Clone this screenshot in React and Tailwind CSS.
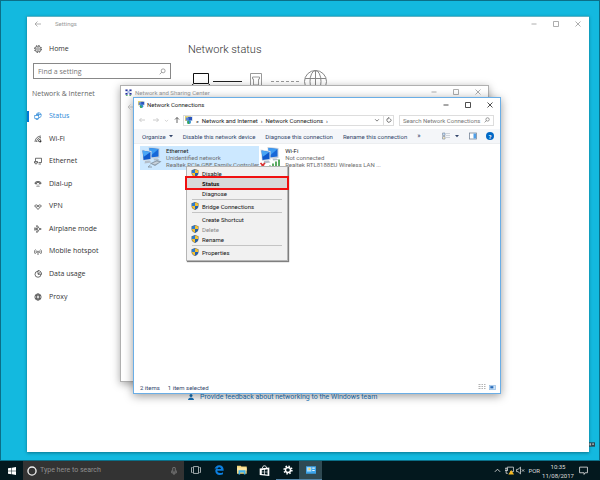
import React from "react";
import clsx from "clsx";

const UI_FONT = "font-['Roboto','Liberation_Sans',sans-serif]";
const PAGE_FONT = "font-['Open_Sans','Noto_Sans',sans-serif]";

function Icon({ size = 16, className, children, ...rest }) {
  return (
    <svg
      viewBox={`0 0 ${size} ${size}`}
      fill="none"
      stroke="currentColor"
      aria-hidden="true"
      className={clsx("shrink-0", className)}
      {...rest}
    >
      {children}
    </svg>
  );
}

function GearIcon({ className }) {
  return (
    <Icon className={className} strokeWidth="1.2">
      <circle cx="8" cy="8" r="2.6" />
      <circle cx="8" cy="8" r="5.6" />
      <circle cx="8" cy="8" r="7" strokeWidth="1.8" strokeDasharray="2.75 2.75" />
    </Icon>
  );
}

function SearchIcon({ className }) {
  return (
    <Icon className={className} strokeWidth="1.5">
      <circle cx="9.5" cy="6.5" r="4.5" />
      <path d="M6.3 9.7 1.5 14.5" />
    </Icon>
  );
}

const NAV = [
  {
    label: "Status",
    icon: (
      <>
        <circle cx="9.5" cy="6.5" r="5" />
        <path d="M5 5h9.500M9.500 1.500c-3 3-2 8 0 10" />
        <rect x="1.500" y="7" width="8" height="6" fill="#fff" />
        <path d="M3.500 15h5" />
      </>
    ),
  },
  {
    label: "Wi-Fi",
    icon: (
      <>
        <path d="M2 14A12 12 0 0 1 14 2M5 14a9 9 0 0 1 9-9M8 14a6 6 0 0 1 6-6" />
        <path d="M11 14a3 3 0 0 1 3-3v3z" fill="currentColor" />
      </>
    ),
  },
  {
    label: "Ethernet",
    icon: (
      <>
        <path d="M3 8V2.500h12V11H9" />
        <path d="M1 9h6v3H1zM4 12v3M9 14h5" />
      </>
    ),
  },
  {
    label: "Dial-up",
    icon: (
      <>
        <path d="M2 6c0-4 12-4 12 0v1.500h-3V5.500C9 4.700 7 4.700 5 5.500v2H2z" fill="currentColor" fillOpacity=".3" />
        <path d="M6 9v1.500M10 9v1.500M6 12.500V14M10 12.500V14M8 10v1M8 13v1" />
      </>
    ),
  },
  {
    label: "VPN",
    icon: (
      <>
        <path d="M1 6c2-3 5-3 7 0s5 3 7 0M1 6c2 3 5 3 7 0s5-3 7 0" />
        <path d="M4.500 9 8 13l3.500-4" />
      </>
    ),
  },
  {
    label: "Airplane mode",
    icon: (
      <path d="M1.500 5.500 4 7h3L5 1.500h2L10.500 7H13c2 0 2 2 0 2h-2.500L7 14.500H5L7 9H4l-2.500 1.500z" />
    ),
  },
  {
    label: "Mobile hotspot",
    icon: (
      <>
        <path d="M3 3C.5 5.500.5 9.500 3 12M5.500 5c-1.500 1.500-1.500 3.500 0 5M13 3c2.500 2.500 2.500 6.500 0 9M10.500 5c1.500 1.500 1.500 3.500 0 5" />
        <path d="M8 8v6" />
        <circle cx="8" cy="7.500" r=".8" />
      </>
    ),
  },
  {
    label: "Data usage",
    icon: (
      <>
        <circle cx="8" cy="8.500" r="6" />
        <path d="M8 8.500V1a7 7 0 0 1 7 7.500z" fill="#fff" />
        <path d="M8 8.500 13 4" />
      </>
    ),
  },
  {
    label: "Proxy",
    icon: (
      <>
        <circle cx="8" cy="8" r="6.300" />
        <ellipse cx="8" cy="8" rx="3" ry="6.300" />
        <path d="M2.500 5.500h11M2.500 10.500h11" />
      </>
    ),
  },
];

function WindowButtons({ className }) {
  return (
    <div className={clsx("flex items-center gap-[14px]", className)}>
      <button aria-label="Minimize">
        <Icon className="size-2" strokeWidth="1.6">
          <path d="M3 8h10" />
        </Icon>
      </button>
      <button aria-label="Maximize">
        <Icon className="size-2" strokeWidth="1.6">
          <path d="M3 3h10v10H3z" />
        </Icon>
      </button>
      <button aria-label="Close">
        <Icon className="size-2" strokeWidth="1.6">
          <path d="m3 3 10 10M13 3 3 13" />
        </Icon>
      </button>
    </div>
  );
}

function NetworkIcon({ className }) {
  return (
    <Icon className={className} stroke="none">
      <rect x="0" y="0" width="12" height="10" fill="#e6d66a" />
      <rect x="5" y="1" width="10" height="9" fill="#b9c9e4" />
      <rect x="6" y="2" width="8" height="6.500" fill="#2b55bd" />
      <rect x="1.500" y="3" width="6" height="6" fill="#5b83d6" />
      <circle cx="8" cy="12" r="4" fill="#2f8fd0" />
      <path d="M5 11c2-2 3.500 0 3 2s2.500 1 0 3-4-2-3-5z" fill="#3fae4a" />
    </Icon>
  );
}

function SharingIcon({ className }) {
  return (
    <Icon className={className} stroke="none">
      <g fill="#24329c">
        <rect x="1" y="1" width="5" height="4" />
        <rect x="10" y="1" width="5" height="4" />
        <rect x="1" y="9" width="5" height="4" />
        <rect x="10" y="9" width="5" height="4" />
      </g>
      <path d="M5 4h6v6H5z" fill="#a9bcea" />
      <path d="M2 14h4v2H2zM10 14h4v2h-4z" fill="#37a34a" />
    </Icon>
  );
}

function ShieldIcon({ className }) {
  return (
    <Icon className={className} stroke="none">
      <path d="M8 0 15 2.500V8c0 4-3 6.500-7 8-4-1.500-7-4-7-8V2.500z" fill="#5b6570" />
      <path d="M8 1v7H2V3.200z" fill="#2b7bd0" />
      <path d="M8 1v7h6V3.200z" fill="#f5c02f" />
      <path d="M2 8h6v7C5 13.700 2 12 2 8z" fill="#f5c02f" />
      <path d="M14 8H8v7c3-1.300 6-3 6-7z" fill="#1e5fb4" />
    </Icon>
  );
}

function AdapterIcon({ wireless }) {
  return (
    <svg viewBox="0 0 48 44" className="h-[22px] w-6 shrink-0" aria-hidden="true">
      <path d="m17 2 22 2v20l-20 1z" fill="#c4cfdb" />
      <path d="m19 4 18 2v15l-17 2z" fill="#1768d8" />
      <path d="m19 4 18 2-14 12-4 2z" fill="#3c9bf2" />
      <path d="m3 7 20 3v18L6 30z" fill="#d4dde6" />
      <path d="m5 9 16 3v14L7 28z" fill="#0f58cc" />
      <path d="m5 9 16 3L7 22z" fill="#4aa5f5" />
      <path d="m10 30 9-1 4 4-14 2z" fill="#b3bec9" />
      <path d="m27 25 8 0 4 3-11 1z" fill="#b3bec9" />
      {wireless ? (
        <>
          <path d="m3 34 9 9M12 34l-9 9" stroke="#d93030" strokeWidth="3.500" />
          <g fill="#5bab62">
            <path d="M20 39h4v5h-4zM26 35h4v9h-4zM32 31h4v13h-4zM38 27h4v17h-4z" />
          </g>
        </>
      ) : (
        <>
          <path d="m20 35 14-7 9 3-13 9z" fill="#8d9caa" />
          <path d="m24 35 9-4 6 1-9 5z" fill="#c8d2db" />
          <path d="m21 38-5 4h8" fill="none" stroke="#8d9caa" strokeWidth="2" />
        </>
      )}
    </svg>
  );
}

function NetworkDiagram() {
  return (
    <svg viewBox="0 0 140 24" fill="none" className="h-6 w-[140px]" aria-hidden="true">
      <path d="M5.500 5.500h15v10h-15zM5 16l-2 3.500h20L21 16" stroke="#111" />
      <path d="M25 13.500h29" stroke="#222" />
      <path d="M62.500 19V5.500h11V19M65.500 17v-6h-1v-2h7v2h-1v6z" stroke="#999" />
      <path d="M83 13.500h30" stroke="#999" strokeDasharray="3 2" />
      <g stroke="#888">
        <circle cx="127.500" cy="13.500" r="11" />
        <ellipse cx="127.500" cy="13.500" rx="5.500" ry="11" />
        <path d="M127.500 2.500v22M117 10.500h21M117 17.500h21" />
      </g>
    </svg>
  );
}

function SettingsWindow() {
  return (
    <section className={clsx("absolute top-4 right-[11px] bottom-[9px] left-[27px] flex flex-col border-t border-[#5fb3c4] bg-white text-[7px] text-[#333] shadow-[0_1px_3px_rgba(0,50,60,0.5)]", PAGE_FONT)}>
      <header className="flex h-[13px] items-center pr-[7px] pl-[7px] text-[#999]">
        <button aria-label="Back">
          <Icon className="size-2" strokeWidth="1.500">
            <path d="M14 8H2M7 3 2 8l5 5" />
          </Icon>
        </button>
        <span className={clsx("ml-[13px] text-[6px] leading-2", UI_FONT)}>Settings</span>
        <WindowButtons className="ml-auto" />
      </header>
      <div className="flex min-h-0 flex-1">
        <aside className="flex w-[144px] shrink-0 flex-col pt-[15px]">
          <a href="#home" className="flex h-2 items-center gap-[7px] pl-[7px] leading-2">
            <GearIcon className="size-2" />
            Home
          </a>
          <label className="mt-[10px] ml-[6px] flex h-4 items-center border border-[#888] px-1">
            <input
              aria-label="Find a setting"
              placeholder="Find a setting"
              className="h-full min-w-0 flex-1 outline-none placeholder:text-[#777]"
            />
            <SearchIcon className="size-[7px] text-[#777]" />
          </label>
          <h2 className="mt-[11px] pl-[5px] leading-2 text-[#666]">Network &amp; Internet</h2>
          <nav className="mt-[7px] flex h-[203px] flex-col">
            {NAV.map((item, i) => (
              <a
                key={item.label}
                href={`#${item.label}`}
                className={clsx("flex flex-1 items-center", i === 0 && "text-[#2b88d8]")}
              >
                <span className={clsx("h-[11px] w-[2px]", i === 0 && "bg-[#0078d7]")} />
                <Icon className="ml-[5px] size-2" strokeWidth="1.400">
                  {item.icon}
                </Icon>
                <span className="ml-[7px]">{item.label}</span>
              </a>
            ))}
          </nav>
        </aside>
        <main className="flex-1 pt-[14px] pl-[17px]">
          <h1 className={clsx("text-[11px] leading-3 font-light", UI_FONT)}>Network status</h1>
          <div className="mt-3">
            <NetworkDiagram />
          </div>
          <a
            href="#feedback"
            className={clsx("mt-[301px] flex items-center gap-[6px] leading-2 text-[#1a75bb]", UI_FONT)}
          >
            <Icon className="size-[6px]" stroke="none" fill="currentColor">
              <circle cx="8" cy="4" r="4" />
              <path d="M0 16c0-9 16-9 16 0z" />
            </Icon>
            Provide feedback about networking to the Windows team
          </a>
        </main>
      </div>
    </section>
  );
}

function SharingCenterWindow() {
  return (
    <section className={clsx("absolute top-[85px] left-[120px] h-[297px] w-[369px] border border-[#b0b0b0] bg-white text-[6px] text-[#999] shadow-[0_2px_8px_rgba(0,0,0,0.35)]", UI_FONT)}>
      <header className="flex h-3 items-center pr-[6px] pl-1">
        <SharingIcon className="size-[7px]" />
        <span className="ml-[3px]">Network and Sharing Center</span>
        <WindowButtons className="ml-auto" />
      </header>
      <button aria-label="Back" className="mt-[5px] ml-[6px] block text-[#bbb]">
        <Icon className="size-2" strokeWidth="1.400">
          <path d="M14 8H2M7 3 2 8l5 5" />
        </Icon>
      </button>
    </section>
  );
}

function AddressRow() {
  return (
    <div className="flex h-[18px] items-center pr-[6px] pl-1 text-[#222]">
      <button aria-label="Back" className="text-[#bbb]">
        <Icon className="size-2" strokeWidth="1.500">
          <path d="M14 8H3M7 4 3 8l4 4" />
        </Icon>
      </button>
      <button aria-label="Forward" className="ml-[6px] text-[#bbb]">
        <Icon className="size-2" strokeWidth="1.500">
          <path d="M2 8h11M9 4l4 4-4 4" />
        </Icon>
      </button>
      <button aria-label="Recent locations" className="ml-1 text-[#bbb]">
        <Icon className="size-[5px]" strokeWidth="2">
          <path d="m3 6 5 5 5-5" />
        </Icon>
      </button>
      <button aria-label="Up" className="ml-1 text-[#555]">
        <Icon className="size-2" strokeWidth="1.800">
          <path d="M8 14V3M4 7l4-4 4 4" />
        </Icon>
      </button>
      <div className="ml-[2px] flex h-[11px] flex-1 items-center gap-[3px] border border-[#ddd] pl-px">
        <NetworkIcon className="size-2" />
        <span>«</span>
        <span>Network and Internet</span>
        <span>›</span>
        <span>Network Connections</span>
        <span>›</span>
        <button aria-label="Previous locations" className="ml-auto text-[#555]">
          <Icon className="size-[6px]" strokeWidth="2">
            <path d="m3 6 5 5 5-5" />
          </Icon>
        </button>
        <button aria-label="Refresh" className="flex h-full w-[10px] items-center justify-center border-l border-[#ddd] text-[#555]">
          <Icon className="size-[6px]" strokeWidth="2">
            <path d="M12 5a5.500 5.500 0 1 1-5-2M6 0l3 3-3 3" />
          </Icon>
        </button>
      </div>
      <label className="ml-[5px] flex h-[11px] w-[95px] items-center border border-[#ddd] px-[3px]">
        <input
          aria-label="Search Network Connections"
          placeholder="Search Network Connections"
          className="min-w-0 flex-1 outline-none placeholder:text-[#777]"
        />
        <SearchIcon className="size-[6px] text-[#555]" />
      </label>
    </div>
  );
}

function Toolbar() {
  return (
    <div className="flex h-[15px] items-center gap-[10px] border-b border-[#eceef0] bg-[#f4f6f9] pr-[6px] pl-2 text-[#33466b]">
      <button className="flex items-center gap-[3px]">
        Organize
        <Icon className="size-1" stroke="none" fill="currentColor">
          <path d="M0 4h16l-8 9z" />
        </Icon>
      </button>
      <button>Disable this network device</button>
      <button>Diagnose this connection</button>
      <button>Rename this connection</button>
      <button className="text-[7px]">»</button>
      <div className="ml-auto flex items-center">
        <button aria-label="Change your view" className="flex items-center gap-[5px]">
          <Icon className="size-2" strokeWidth="1.500" stroke="#8a96a5">
            <path d="M1 2h5v5H1zM1 9h5v5H1zM9 3h2M13 3h2M9 7h2M13 7h2M9 11h2M13 11h2" />
            <path d="M3 3h2v2H3z" fill="#3b8be0" stroke="none" />
            <path d="M3 11h2v2H3z" fill="#e0b23b" stroke="none" />
          </Icon>
          <Icon className="size-1" stroke="none" fill="currentColor">
            <path d="M0 4h16l-8 9z" />
          </Icon>
        </button>
        <button aria-label="Preview pane" className="ml-[10px]">
          <Icon className="size-2" strokeWidth="1.500" stroke="#6f7f92">
            <rect x="1" y="2" width="14" height="12" fill="#fff" />
            <path d="M9 3h5v10H9z" fill="#4f9fe8" stroke="none" />
          </Icon>
        </button>
        <button
          aria-label="Help"
          className="ml-[9px] flex size-2 items-center justify-center rounded-full bg-[#0068c6] font-bold text-white"
        >
          ?
        </button>
      </div>
    </div>
  );
}

const ADAPTERS = [
  { name: "Ethernet", state: "Unidentified network", device: "Realtek PCIe GBE Family Controller", selected: true },
  { name: "Wi-Fi", state: "Not connected", device: "Realtek RTL8188EU Wireless LAN ...", wireless: true },
];

function ConnectionsWindow() {
  return (
    <section className={clsx("absolute top-[97px] left-[133px] flex h-[297px] w-[368px] flex-col border border-[#6aaee6] bg-white text-[6px] text-[#222] shadow-[0_2px_9px_rgba(0,0,0,0.4)]", UI_FONT)}>
      <header className="flex h-[13px] items-center pr-[6px] pl-1">
        <NetworkIcon className="size-[7px]" />
        <span className="ml-[2px]">Network Connections</span>
        <WindowButtons className="ml-auto" />
      </header>
      <AddressRow />
      <Toolbar />
      <ul className="flex flex-1 items-start pt-[2px] pl-[6px]">
        {ADAPTERS.map((a) => (
          <li key={a.name} className={clsx("flex", a.selected && "min-w-[117px] bg-[#cce8ff]")}>
            <AdapterIcon wireless={a.wireless} />
            <div className="ml-[2px] pt-px pb-[2px] leading-[7px] whitespace-nowrap text-[#6d6d6d]">
              <div className="text-[#222]">{a.name}</div>
              <div>{a.state}</div>
              <div>{a.device}</div>
            </div>
          </li>
        ))}
      </ul>
      <footer className="flex h-3 items-center pr-1 pl-[6px] text-[#33466b]">
        <span>2 items</span>
        <span className="ml-2">1 item selected</span>
        <button aria-label="Details" className="ml-auto">
          <Icon className="size-2" strokeWidth="1.500" stroke="#999">
            <path d="M1 3h4M1 7h4M1 11h4M7 3h3M7 7h3M7 11h3M12 3h3M12 7h3M12 11h3" />
          </Icon>
        </button>
        <button aria-label="Large icons" className="ml-[3px]">
          <Icon className="size-[7px]" strokeWidth="1.500" stroke="#8fb8e0">
            <rect x="1" y="3" width="14" height="10" fill="#cfe4f8" />
            <path d="M3 5h7v5H3z" fill="#2468b8" stroke="none" />
          </Icon>
        </button>
      </footer>
    </section>
  );
}

const MENU = [
  [{ label: "Disable", shield: true }, { label: "Status", active: true }, { label: "Diagnose" }],
  [{ label: "Bridge Connections", shield: true }],
  [
    { label: "Create Shortcut" },
    { label: "Delete", shield: true, disabled: true },
    { label: "Rename", shield: true },
  ],
  [{ label: "Properties", shield: true }],
];

function ContextMenu() {
  return (
    <div className={clsx("absolute top-[166px] left-[186px] w-[102px] border border-[#b5b5b5] bg-[#f1f1f1] pt-px pb-[3px] text-[6px] text-[#111] shadow-[1px_1px_1px_rgba(0,0,0,0.5)]", UI_FONT)}>
      {MENU.map((group, g) => (
        <div
          key={g}
          className="before:mx-[5px] before:my-[1px] before:block before:h-px before:bg-[#c4c4c4] first:before:hidden"
        >
          {group.map((item) => (
            <button
              key={item.label}
              disabled={item.disabled}
              className={clsx(
                "flex h-[10px] w-full items-center",
                item.active && "bg-[#d8d8d8] font-bold outline-2 outline-[#f01010]",
                item.disabled && "text-[#888]"
              )}
            >
              <span className="w-[15px] pl-1">{item.shield && <ShieldIcon className="size-2" />}</span>
              {item.label}
            </button>
          ))}
        </div>
      ))}
    </div>
  );
}

function TaskButton({ label, active, running, children }) {
  return (
    <button
      aria-label={label}
      className={clsx(
        "flex w-[23px] items-center justify-center border-b",
        active ? "bg-[#2f4a53]" : "",
        active || running ? "border-[#5485a8]" : "border-transparent"
      )}
    >
      {children}
    </button>
  );
}

function Taskbar() {
  return (
    <footer className={clsx("flex h-[19px] shrink-0 bg-[#03181e] text-[7px] text-[#ddd]", UI_FONT)}>
      <button aria-label="Start" className="flex w-[23px] items-center justify-center text-white">
        <Icon className="size-2" stroke="none" fill="currentColor">
          <path d="m0 2.500 7-1V7.500H0zM8 1.300 16 0v7.500H8zM0 8.500h7v6l-7-1zM8 8.500h8V16l-8-1.300z" />
        </Icon>
      </button>
      <label className="flex w-[161px] items-center bg-[#333] pr-[6px] pl-1">
        <Icon className="size-[10px] text-[#eee]" strokeWidth="2.200">
          <circle cx="8" cy="8" r="6.500" />
        </Icon>
        <input
          aria-label="Type here to search"
          placeholder="Type here to search"
          className="ml-[3px] min-w-0 flex-1 outline-none placeholder:text-[#8f8f8f]"
        />
        <Icon className="size-2 text-[#888]" strokeWidth="1.500">
          <rect x="5.500" y="1" width="5" height="9" rx="1" />
          <path d="M3.500 7v5h9V7M8 12v4" />
        </Icon>
      </label>
      <TaskButton label="Task view">
        <Icon className="size-[10px] text-[#a8b0b2]" strokeWidth="1.500">
          <path d="M4 2.500h8v11H4zM2.500 4H.8v8h1.700M13.500 4h1.700v8h-1.700" />
        </Icon>
      </TaskButton>
      <TaskButton label="Microsoft Edge">
        <Icon className="size-[10px]" stroke="none" fill="#0c7fe0">
          <path d="M.8 7.200C1.500 2.800 4.500.3 8.300.3c4.500 0 7.100 3.200 7.100 7.300v1.700H5.200c.1 2.500 2.100 3.600 4.500 3.600 1.800 0 3.400-.5 4.700-1.400v3.300c-1.500.8-3.300 1.200-5.300 1.200-4.300 0-7-2.600-7-6.300 0-2.300 1.200-4.200 3.100-5.300C2.900 4.900 1.700 5.800.8 7.200zM5.400 6.400h5.700c0-1.800-1-2.900-2.700-2.900-1.600 0-2.700 1.200-3 2.900z" />
        </Icon>
      </TaskButton>
      <TaskButton label="File Explorer">
        <Icon className="size-[10px]" stroke="none">
          <path d="M0 1h6l1 1.500h8.500V14H0z" fill="#f3d37a" />
          <path d="M0 4h15.500v5H0z" fill="#fbe6a3" />
          <path d="M2.500 8.500h11V15H11v-3H5v3H2.500z" fill="#42b0e8" />
        </Icon>
      </TaskButton>
      <TaskButton label="Store">
        <Icon className="size-[11px]" stroke="#fff" strokeWidth="1.300">
          <path d="m1 5 14-1.500V16L1 14.500z" fill="#fff" stroke="none" />
          <path d="M5 4.500C5 0 11 0 11 4.500" />
          <path d="M4 7.500 7.300 7v2.700H4zM8.300 6.800 12.500 6.300v3.400H8.300zM4 10.700h3.300v2.700L4 13zM8.300 10.700h4.200V14l-4.200-.5z" fill="#03181e" stroke="none" />
        </Icon>
      </TaskButton>
      <TaskButton label="Settings" running>
        <Icon className="size-[10px]" stroke="#fff">
          <circle cx="8" cy="8" r="4" strokeWidth="2.200" />
          <circle cx="8" cy="8" r="6.200" strokeWidth="2.400" strokeDasharray="2.440 2.430" />
        </Icon>
      </TaskButton>
      <TaskButton label="Network Connections" active>
        <Icon className="size-[10px]" stroke="none">
          <rect x="0" y="2" width="16" height="12" fill="#3ba3ea" />
          <rect x="1.500" y="3.500" width="7" height="7" fill="#a8dcfa" />
          <path d="M10 4h4v2h-4zM10 8h4v1.500h-4z" fill="#e4f5ff" />
          <path d="M4 5h3v3H4z" fill="#f0d060" />
        </Icon>
      </TaskButton>
      <div className="ml-auto flex items-center">
        <button aria-label="Show hidden icons">
          <Icon className="size-[7px]" strokeWidth="2">
            <path d="m2 11 6-6 6 6" />
          </Icon>
        </button>
        <button aria-label="Network" className="ml-1">
          <Icon className="size-[9px]" strokeWidth="1.400">
            <path d="M4 9V2h11v8H9M0 4h4v4H0zM2 8v5h3" />
            <path d="m11 7 5 8H6z" fill="#f5b921" stroke="none" />
          </Icon>
        </button>
        <button aria-label="Volume muted" className="ml-[2px]">
          <Icon className="size-[9px]" strokeWidth="1.400">
            <path d="M1 6h2.500L8 2v12l-4.500-4H1zM10.500 6l4 4M14.500 6l-4 4" />
          </Icon>
        </button>
        <span className="ml-[3px] text-[6px]">POR</span>
        <div className="ml-[2px] text-center text-[6px] leading-[9px]">
          <div>10:35</div>
          <div>11/08/2017</div>
        </div>
        <button aria-label="Notifications" className="mr-3 ml-[5px]">
          <Icon className="size-[9px]" strokeWidth="1.500">
            <path d="M1 2h14v10h-4l-2 3v-3H1z" />
          </Icon>
        </button>
      </div>
    </footer>
  );
}

export default function App() {
  return (
    <div className="flex h-screen flex-col overflow-hidden">
      <div className="relative flex-1 bg-[#13b9df] shadow-[inset_0_0_0_1px_#0b6f88]">
        <Icon className="absolute right-[5px] bottom-[13px] size-[7px]" stroke="none">
          <path d="M0 3h16v10H0z" fill="#2c4750" />
          <path d="M3 5h4v5H3zM10 5h3v4h-3z" fill="#b9c8cc" />
        </Icon>
        <SettingsWindow />
        <SharingCenterWindow />
        <ConnectionsWindow />
        <ContextMenu />
      </div>
      <Taskbar />
    </div>
  );
}
